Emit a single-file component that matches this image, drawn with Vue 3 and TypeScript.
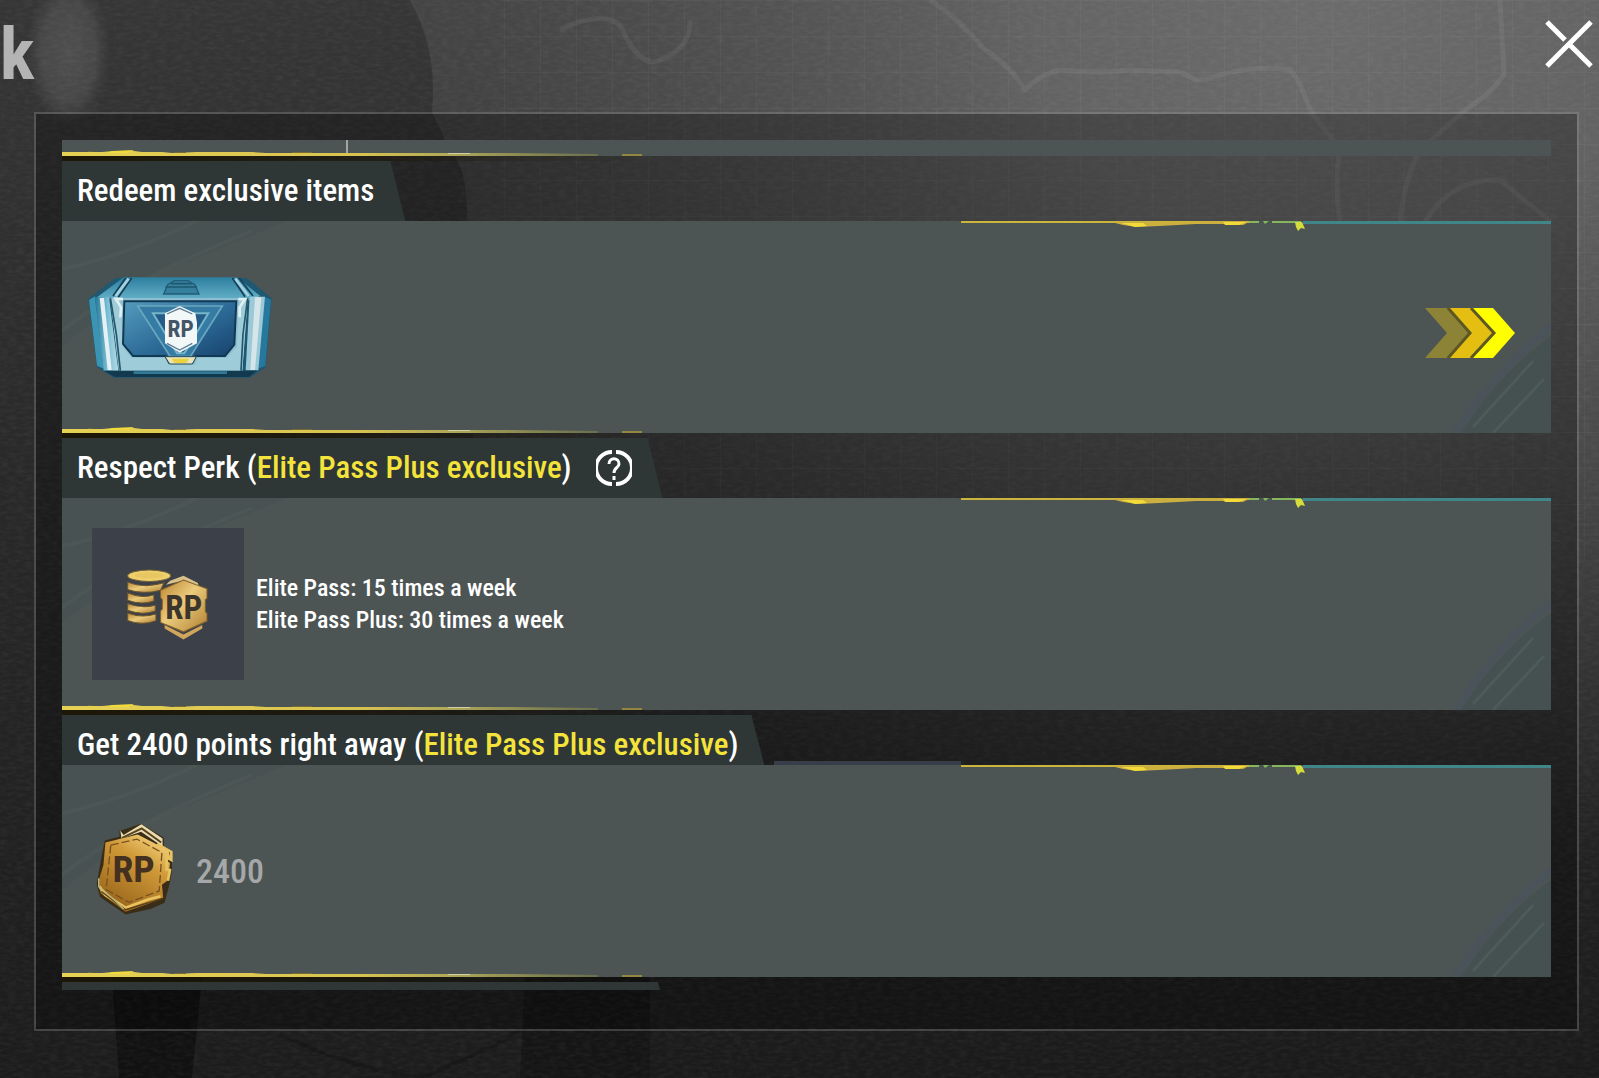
<script setup lang="ts">
interface Perk {
  id: string
  title: string
  exclusive?: string
  help?: boolean
}

const perks: Perk[] = [
  { id: 'redeem', title: 'Redeem exclusive items' },
  { id: 'respect', title: 'Respect Perk', exclusive: 'Elite Pass Plus exclusive', help: true },
  { id: 'points', title: 'Get 2400 points right away', exclusive: 'Elite Pass Plus exclusive' },
]
</script>

<template>
  <main class="screen">
    <svg class="backdrop" viewBox="0 0 1599 1078" preserveAspectRatio="none" aria-hidden="true">
      <defs>
        <linearGradient id="base" x1="0" y1="0" x2="0" y2="1">
          <stop offset="0" stop-color="#424242" />
          <stop offset="0.5" stop-color="#2d2d2d" />
          <stop offset="1" stop-color="#1a1a1a" />
        </linearGradient>
        <radialGradient id="glow" gradientUnits="userSpaceOnUse" cx="1330" cy="20" r="1050" gradientTransform="translate(0 4) scale(1 0.82)">
          <stop offset="0" stop-color="#707070" stop-opacity="0.9" />
          <stop offset="0.28" stop-color="#6c6c6c" stop-opacity="0.8" />
          <stop offset="0.6" stop-color="#5c5c5c" stop-opacity="0.5" />
          <stop offset="1" stop-color="#4a4a4a" stop-opacity="0" />
        </radialGradient>
        <radialGradient id="smoke">
          <stop offset="0" stop-color="#505050" stop-opacity="0.95" />
          <stop offset="0.65" stop-color="#4c4c4c" stop-opacity="0.8" />
          <stop offset="1" stop-color="#444" stop-opacity="0" />
        </radialGradient>
        <linearGradient id="figure" x1="0" y1="0" x2="0" y2="1">
          <stop offset="0" stop-color="#363636" />
          <stop offset="0.4" stop-color="#2a2a2a" />
          <stop offset="1" stop-color="#1c1c1c" />
        </linearGradient>
        <pattern id="grid" width="36" height="36" patternUnits="userSpaceOnUse">
          <path d="M36 0H0V36" fill="none" stroke="#fff" stroke-opacity="0.03" stroke-width="2" />
        </pattern>
        <filter id="grain" x="0" y="0" width="1" height="1">
          <feTurbulence type="fractalNoise" baseFrequency="0.12 0.3" numOctaves="3" seed="4" />
          <feColorMatrix values="0 0 0 0 1  0 0 0 0 1  0 0 0 0 1  0.35 0 0 0 -0.12" />
        </filter>
      </defs>
      <rect width="1599" height="1078" fill="url(#base)" />
      <rect width="1599" height="1078" fill="url(#glow)" />
      <path d="M0 0H410Q438 50 432 112L450 150Q476 180 462 260L490 700Q540 900 520 1078H0Z" fill="url(#figure)" />
      <rect x="500" width="1099" height="560" fill="url(#grid)" />
      <g fill="none" stroke="#fff" stroke-opacity="0.06" stroke-width="5" stroke-linejoin="round">
        <path d="M930 0Q960 20 985 50Q1010 65 1025 90Q1040 74 1060 70Q1100 74 1130 70L1180 72Q1200 84 1210 78Q1250 64 1290 70Q1300 80 1310 110L1340 150Q1334 180 1340 222" />
        <path d="M1500 0L1504 75Q1490 95 1465 110L1420 150Q1404 180 1400 222" />
        <path d="M560 30Q600 10 620 25Q640 70 660 60Q690 50 690 20" />
        <path d="M1425 222Q1450 178 1500 180L1551 222" />
      </g>
      <ellipse cx="68" cy="52" rx="42" ry="76" fill="url(#smoke)" />
      <path d="M112 977H202L192 1078H119Z" fill="#111" />
      <path d="M525 977H650V1078H520Z" fill="#151515" />
      <path d="M280 1034Q350 1068 420 1078Q490 1050 520 1030" fill="none" stroke="#171717" stroke-width="4" />
      <rect width="1599" height="1078" filter="url(#grain)" opacity="0.25" />
    </svg>

    <header class="topbar">
      <h1 class="heading">k</h1>
      <button class="close" type="button" aria-label="Close">
        <svg viewBox="0 0 48 48" aria-hidden="true">
          <path d="M2 2L20 20M25 25L46 46M46 2L2 46" fill="none" stroke="#fff" stroke-width="5" />
        </svg>
      </button>
    </header>

    <section class="panel">
      <div class="card sliver">
        <i class="divider"></i>
        <svg class="foot" viewBox="0 0 590 12" aria-hidden="true"><use href="#brush" /></svg>
      </div>

      <article v-for="perk in perks" :key="perk.id" class="perk">
        <div class="tab" :class="perk.id">
          <h2>
            {{ perk.title }}<template v-if="perk.exclusive"> (<em>{{ perk.exclusive }}</em>)</template>
          </h2>
          <button v-if="perk.help" class="help" type="button" aria-label="About this perk">
            <svg viewBox="0 0 36 36" aria-hidden="true">
              <g fill="none" stroke="#fff">
                <path d="M16 2A16 16 0 0 0 16 34M20 2A16 16 0 0 1 20 34" stroke-width="4" />
                <path d="M13 14C13 7 23 7 23 14C23 18 18 17 18 23M18 26V30" stroke-width="3" />
              </g>
            </svg>
          </button>
        </div>

        <div class="card" :class="{ edged: perk.id === 'points' }">
          <svg class="scratch left" viewBox="0 0 230 212" aria-hidden="true">
            <path d="M0 0H225L90 55L0 125Z" fill="#2f4548" opacity="0.16" />
            <path d="M0 48Q60 36 135 0M0 110Q55 65 190 10" fill="none" stroke="#718078" stroke-opacity="0.1" stroke-width="4" />
          </svg>
          <svg class="scratch right" viewBox="0 0 150 212" aria-hidden="true">
            <path d="M60 212Q100 150 150 115V212Z" fill="#33484a" opacity="0.3" />
            <path d="M55 212Q90 155 150 105" fill="none" stroke="#49516a" stroke-opacity="0.25" stroke-width="8" />
            <path d="M92 212L143 158M72 206L132 140" fill="none" stroke="#687872" stroke-opacity="0.25" stroke-width="3" />
          </svg>
          <svg class="crown" viewBox="0 0 590 12" aria-hidden="true">
            <path d="M0 0H290V2H0Z" fill="#cbb53c" />
            <path d="M150 1H230L275 0H290L282 4L262 3L235 3L198 5L176 6L162 4Z" fill="#cbb040" />
            <path d="M160 2H182L186 5L174 6ZM262 1H286L278 4H264Z" fill="#f2da38" />
            <path d="M288 0H298V2H288ZM302 0H308L304 3ZM311 0H340V2H311Z" fill="#84b75c" />
            <path d="M334 1H341L344 8L340 7L337 10L335 6Z" fill="#d4dc3e" />
            <path d="M342 0H590V3H342Z" fill="#408689" />
          </svg>

          <svg v-if="perk.id === 'redeem'" class="chest" viewBox="80 76 558 308" role="img" aria-label="RP crate">
            <defs>
              <linearGradient id="lid" x1="0" y1="0" x2="0" y2="1">
                <stop offset="0" stop-color="#2d7f9f" /><stop offset="1" stop-color="#67b2ca" />
              </linearGradient>
              <linearGradient id="front" x1="0" y1="0" x2="1" y2="1">
                <stop offset="0" stop-color="#559bbd" /><stop offset="0.5" stop-color="#2d6c98" /><stop offset="1" stop-color="#133d67" />
              </linearGradient>
              <linearGradient id="side" x1="0" y1="0" x2="1" y2="0">
                <stop offset="0" stop-color="#257698" /><stop offset="0.55" stop-color="#7ac0d5" /><stop offset="1" stop-color="#b7d9e4" />
              </linearGradient>
            </defs>
            <path d="M84 145L165 82H560L634 142L616 350L570 381H160L110 350Z" fill="#1f5871" />
            <path d="M110 140L190 80H530L600 136L560 150H160Z" fill="url(#lid)" />
            <path d="M196 82L158 136M214 82L174 140M516 82L554 138M536 82L578 136" fill="none" stroke="#163e58" stroke-width="5" />
            <path d="M205 84L166 136M525 84L565 136" fill="none" stroke="#a5d2de" stroke-width="8" />
            <path d="M310 130L322 102L342 90H382L404 102L416 130Z" fill="#37809d" stroke="#215c78" stroke-width="4" />
            <path d="M315 109H410M332 99H394" stroke="#1f5871" stroke-width="5" />
            <path d="M86 148L104 137L130 354L110 345Z" fill="#3c94b5" />
            <path d="M103 140H146L174 360H130Z" fill="url(#side)" />
            <path d="M118 142H131L154 358H142Z" fill="#e4f0f3" />
            <path d="M632 147L612 138L590 355L615 346Z" fill="#26799c" />
            <path d="M568 138H614L594 359H556Z" fill="#9cc9d7" />
            <path d="M584 140H603L584 358H570Z" fill="#d6e5ea" />
            <path d="M150 142H562L546 360H176Z" fill="#8bbfd1" />
            <path d="M150 142H180L188 290L214 322H318L326 342H404L412 322H498L530 288L536 142H562L546 360H176Z" fill="#9fccd9" />
            <path d="M192 152H528L522 282L494 316H406L396 336H326L316 316H218L188 280Z" fill="url(#front)" stroke="#123854" stroke-width="6" />
            <path d="M232 166H486L390 318H330Z" fill="#367ba3" stroke="#69a8bf" stroke-width="5" />
            <path d="M278 188H444L372 308H350Z" fill="#255c88" stroke="#75b5c9" stroke-width="6" />
            <path d="M150 142L168 250L180 360M562 142L548 250L542 360" fill="none" stroke="#24566c" stroke-width="5" />
            <path d="M188 145L166 144L182 170L180 200M534 145L554 146L538 170V200" fill="none" stroke="#e3f0f2" stroke-width="8" />
            <path d="M358 166L405 188L410 216V278L358 306L314 278V188Z" fill="#f2f7f8" />
            <path d="M320 190L358 173L396 190M320 278L358 298L396 278" fill="none" stroke="#5d7d94" stroke-width="4" />
            <text x="361" y="258" class="rp" font-size="70" fill="#435566">RP</text>
            <path d="M314 318H408L396 340H328Z" fill="#e9e4ba" stroke="#274b5c" stroke-width="3" />
            <path d="M334 324H386L378 337H342Z" fill="#ecd23c" />
            <path d="M130 360H590L566 379H164Z" fill="#12394e" />
            <path d="M220 362H500V370H220Z" fill="#327a97" />
          </svg>
          <button v-if="perk.id === 'redeem'" class="go" type="button" aria-label="Go to redeem">
            <svg viewBox="0 0 90 50" aria-hidden="true">
              <path d="M0 0H22L45 25L22 50H0L22 25Z" fill="#8d8337" />
              <path d="M24 0H46L68 25L46 50H24L45 25Z" fill="#e4bf12" />
              <path d="M47 0H68L90 25L68 50H47L70 25Z" fill="#ffff00" />
              <path d="M23 0L45 25L23 50M46 0L69 25L46 50" fill="none" stroke="#5d5722" stroke-width="3" />
            </svg>
          </button>

          <template v-if="perk.id === 'respect'">
            <div class="tile">
              <svg viewBox="196 180 256 216" role="img" aria-label="RP points">
                <defs>
                  <linearGradient id="gold" x1="0" y1="0" x2="1" y2="1">
                    <stop offset="0" stop-color="#b98532" /><stop offset="0.45" stop-color="#ebcb7c" /><stop offset="1" stop-color="#b17f32" />
                  </linearGradient>
                </defs>
                <g fill="url(#gold)" stroke="#6b552c" stroke-width="3">
                  <path d="M204 314Q245 330 288 317V337Q245 353 204 336Z" />
                  <path d="M204 286Q245 302 286 291V308Q245 322 204 306Z" />
                  <path d="M204 254Q244 272 282 260V278Q245 292 204 276Z" />
                  <path d="M204 222Q255 242 312 224L302 246Q245 260 204 244Z" />
                </g>
                <ellipse cx="268" cy="203" rx="64" ry="17" fill="#efd06f" stroke="#796333" stroke-width="3" />
                <ellipse cx="268" cy="202" rx="44" ry="9" fill="#e8c762" />
                <path d="M318 230L330 218L370 203L413 225L416 240L370 217Z" fill="#d9c18a" />
                <path d="M370 216L440 242V270L435 275V310L440 315V338L370 370L302 342V308L307 302V274L302 268V246Z" fill="url(#gold)" stroke="#85632b" stroke-width="3" />
                <path d="M314 350L370 378L426 350V360L370 393L314 360Z" fill="#d0a65c" />
                <text x="371" y="332" class="rp" font-size="98" fill="#3b352d">RP</text>
              </svg>
            </div>
            <p class="lines">
              <span>Elite Pass: 15 times a week</span>
              <span>Elite Pass Plus: 30 times a week</span>
            </p>
          </template>

          <template v-if="perk.id === 'points'">
            <svg class="coin" viewBox="108 98 232 274" role="img" aria-label="RP points">
              <defs>
                <linearGradient id="coinface" x1="0.8" y1="0" x2="0.2" y2="1">
                  <stop offset="0" stop-color="#f5d57e" /><stop offset="0.35" stop-color="#cf9838" /><stop offset="1" stop-color="#946018" />
                </linearGradient>
              </defs>
              <path d="M178 122L242 100L310 142V168L334 184V240L328 275L312 335L270 354L196 370L120 318L110 280L124 200L134 150L178 138Z" fill="#3a2d18" />
              <path d="M180 120L190 134L243 102L306 144V170L292 158L242 124L184 144Z" fill="#e9dcaf" />
              <path d="M186 142L244 114L302 156" fill="none" stroke="#594321" stroke-width="6" />
              <path d="M136 156L232 132L324 180L330 204L318 208L328 218L322 268L304 282L308 320L264 338L196 362L122 308L114 276L130 224Z" fill="url(#coinface)" />
              <path d="M152 164L230 146L304 186L296 300L206 334L138 296Z" fill="none" stroke="#7a5220" stroke-width="4" stroke-dasharray="24 9" />
              <path d="M290 160L332 184V208L318 200V236L328 238L322 270M118 286L136 312L196 350L262 326L300 316" fill="none" stroke="#e8c25f" stroke-width="8" />
              <path d="M124 302L196 356L268 334L306 322" fill="none" stroke="#5b4018" stroke-width="4" />
              <path d="M116 262V286L166 330L190 354" fill="none" stroke="#b6ba83" stroke-width="4" />
              <text x="220" y="274" class="rp" font-size="112" fill="#443020">RP</text>
            </svg>
            <span class="amount">2400</span>
          </template>

          <svg class="foot" viewBox="0 0 590 12" aria-hidden="true"><use href="#brush" /></svg>
        </div>
      </article>

      <div class="tab next"></div>
    </section>

    <svg class="shapes" aria-hidden="true">
      <defs>
        <linearGradient id="fade" gradientUnits="userSpaceOnUse" x1="0" y1="0" x2="590" y2="0">
          <stop offset="0" stop-color="#e6d154" />
          <stop offset="0.5" stop-color="#d9c350" />
          <stop offset="0.68" stop-color="#a9a45a" />
          <stop offset="1" stop-color="#8a8a40" stop-opacity="0.2" />
        </linearGradient>
        <linearGradient id="shade" gradientUnits="userSpaceOnUse" x1="0" y1="0" x2="590" y2="0">
          <stop offset="0" stop-color="#1c1707" />
          <stop offset="1" stop-color="#1c1707" stop-opacity="0" />
        </linearGradient>
      </defs>
      <g id="brush">
        <path d="M0 3H40L52 2H72L80 3H100L110 4L135 3H190L204 4H450L536 5V7H0Z" fill="url(#fade)" />
        <path d="M50 2L72 1L66 4H44Z" fill="#f0da3c" />
        <path d="M26 2L34 3H26ZM112 3H124V4H112ZM230 3H250V4H230Z" fill="#756936" />
        <path d="M560 5H580V7H560Z" fill="#938640" />
        <path d="M386 4H408V5H386Z" fill="#d2cda6" />
        <path d="M0 7H590V12H0Z" fill="url(#shade)" />
      </g>
    </svg>
  </main>
</template>

<style>
body {
  margin: 0;
  background: #1c1c1c;
}
</style>

<style scoped>
.screen {
  position: relative;
  box-sizing: border-box;
  min-height: 100vh;
  padding: 0 20px 47px 34px;
  overflow: hidden;
  color: #fff;
  font-family: "Roboto Condensed", Roboto, "Liberation Sans", sans-serif;
}

.backdrop {
  position: absolute;
  inset: 0;
  width: 100%;
  height: 100%;
}

.shapes {
  position: absolute;
  width: 0;
  height: 0;
}

.topbar {
  position: relative;
  display: flex;
  justify-content: space-between;
  height: 112px;
  margin: 0 -14px 0 -34px;
}

.heading {
  margin: 0;
  color: #b4b4b4;
  font-size: 72px;
  line-height: 110px;
}

button {
  padding: 0;
  border: 0;
  background: none;
  cursor: pointer;
}

button svg {
  display: block;
  width: 100%;
}

.close {
  width: 48px;
  height: 48px;
  margin-top: 20px;
}

.panel {
  position: relative;
  display: flex;
  flex-direction: column;
  gap: 5px;
  padding: 26px 26px 39px;
  border: 2px solid rgba(160, 160, 160, 0.3);
  background: rgba(0, 0, 0, 0.28);
  background-clip: padding-box;
}

.card {
  position: relative;
  display: flex;
  align-items: center;
  box-sizing: border-box;
  height: 212px;
  padding: 0 36px 0 30px;
  background: #4d5554;
}

.card.edged::before {
  content: "";
  position: absolute;
  top: -4px;
  right: 590px;
  left: 712px;
  height: 4px;
  background: #373d49;
}

.sliver {
  height: 16px;
}

.divider {
  width: 2px;
  height: 16px;
  margin-left: 254px;
  background: #a0a6a4;
}

.tab {
  display: flex;
  align-items: center;
  gap: 24px;
  box-sizing: border-box;
  width: fit-content;
  height: 60px;
  padding: 0 31px 0 15px;
  background: #2e3636;
  clip-path: polygon(0 0, calc(100% - 15px) 0, 100% 100%, 0 100%);
}

.tab.points {
  height: 50px;
  padding: 10px 26px 0 15px;
  clip-path: polygon(0 0, calc(100% - 13px) 0, 100% 100%, 0 100%);
}

.tab.next {
  width: 598px;
  height: 8px;
  clip-path: polygon(0 0, calc(100% - 2px) 0, 100% 100%, 0 100%);
}

h2 {
  margin: 0;
  font-size: 31px;
  font-weight: 500;
  line-height: 40px;
  white-space: nowrap;
}

h2 em {
  color: #f3e33b;
  font-style: normal;
}

.help {
  width: 36px;
  height: 36px;
}

.scratch,
.crown,
.foot {
  position: absolute;
}

.scratch.left {
  top: 0;
  left: 0;
  width: 230px;
}

.scratch.right {
  right: 0;
  bottom: 0;
  width: 150px;
}

.crown {
  top: 0;
  right: 0;
  width: 590px;
}

.foot {
  bottom: -5px;
  left: 0;
  width: 590px;
}

.chest {
  position: relative;
  width: 186px;
  margin-left: -5px;
}

.go {
  position: relative;
  width: 90px;
  height: 50px;
  margin: 12px 0 0 auto;
}

.tile {
  position: relative;
  display: flex;
  align-items: center;
  justify-content: center;
  width: 152px;
  height: 152px;
  background: #3c4049;
}

.tile svg {
  width: 86px;
}

.lines {
  position: relative;
  display: flex;
  flex-direction: column;
  margin: 0 0 0 12px;
  font-size: 24px;
  font-weight: 500;
  line-height: 32px;
}

.coin {
  position: relative;
  width: 78px;
  margin: 0 22px 4px 4px;
}

.amount {
  position: relative;
  color: #a5a8a9;
  font-size: 34px;
  font-weight: 500;
}

.rp {
  font-weight: 700;
  text-anchor: middle;
}
</style>
